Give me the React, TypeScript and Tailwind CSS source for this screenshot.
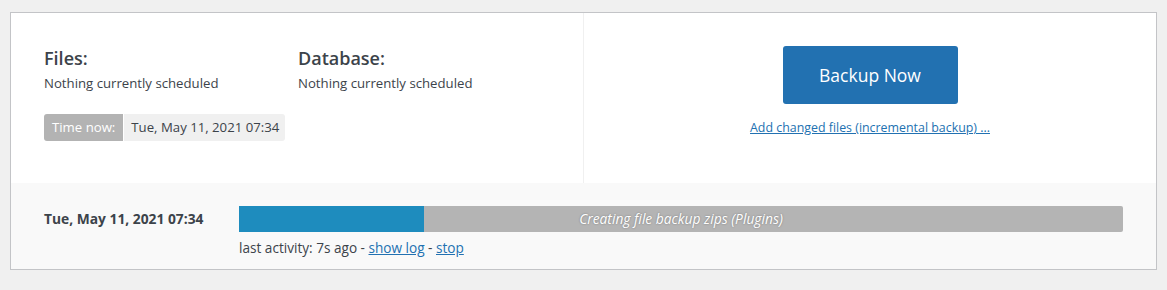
export default function App() {
  return (
    <div className="min-h-[290px] w-[1167px] bg-[#f0f0f0] pt-3 pl-[10px] font-['Open_Sans',sans-serif] text-[#3c434a]">
      <div className="w-[1147px] border border-[#c3c4c7] bg-white">
        <div className="flex h-[170px]">
          <div className="w-[573px] border-r border-[#f0f0f0] pl-[33px] pt-[33px]">
            <div className="flex">
              <div className="w-[254px]">
                <h3 className="text-[18px] font-semibold leading-[24px] text-[#3c434a]">Files:</h3>
                <p className="mt-[4px] text-[13.2px] leading-[18px]">Nothing currently scheduled</p>
              </div>
              <div>
                <h3 className="text-[18px] font-semibold leading-[24px] text-[#3c434a]">Database:</h3>
                <p className="mt-[4px] text-[13.2px] leading-[18px]">Nothing currently scheduled</p>
              </div>
            </div>
            <div className="mt-[22px] inline-flex h-[27px] overflow-hidden rounded-[3px] text-[13.2px]">
              <span className="flex items-center bg-[#b3b3b3] px-[8px] text-white">Time now:</span>
              <span className="ml-px flex items-center bg-[#f0f0f0] pl-[7px] pr-[6px] text-[#3c434a]">Tue, May 11, 2021 07:34</span>
            </div>
          </div>
          <div className="flex flex-1 flex-col items-center pt-[33px]">
            <button className="h-[58px] w-[175px] rounded-[3px] bg-[#2271b1] text-[17.5px] text-white">Backup Now</button>
            <a href="#" className="mt-[16px] text-[12.4px] leading-[16px] text-[#2271b1] underline">
              Add changed files (incremental backup) ...
            </a>
          </div>
        </div>
        <div className="flex h-[86px] bg-[#f9f9f9] pl-[33px] pt-[23px]">
          <div className="w-[195px] pt-[4px] text-[13.8px] font-bold leading-[18px] text-[#3c434a]">Tue, May 11, 2021 07:34</div>
          <div className="w-[884px]">
            <div className="relative flex h-[26px] overflow-hidden rounded-r-[2px] bg-[#b4b4b4]">
              <div className="h-full w-[185px] bg-[#1e8cbe]" />
              <span className="absolute inset-0 flex items-center justify-center text-[13.8px] italic text-white [text-shadow:0_0_2px_rgba(0,0,0,0.35)]">
                Creating file backup zips (Plugins)
              </span>
            </div>
            <div className="mt-[7px] text-[13.6px] leading-[18px]">
              last activity: 7s ago - <a href="#" className="text-[#2271b1] underline">show log</a> -{" "}
              <a href="#" className="text-[#2271b1] underline">stop</a>
            </div>
          </div>
        </div>
      </div>
    </div>
  );
}
